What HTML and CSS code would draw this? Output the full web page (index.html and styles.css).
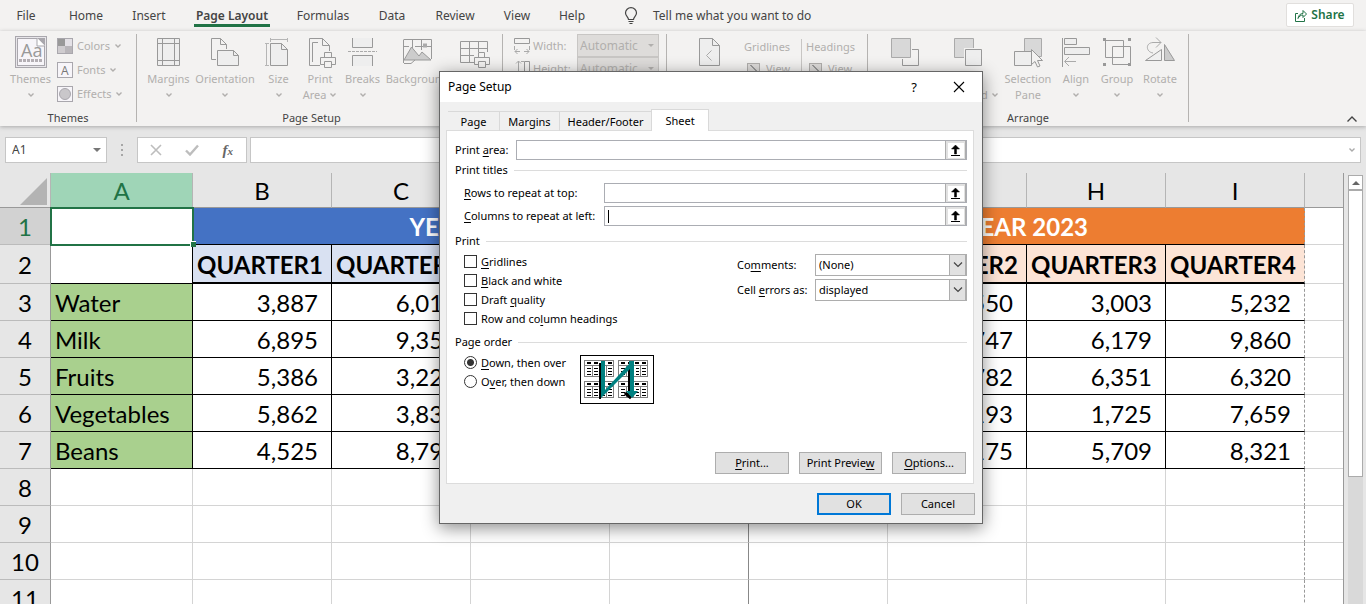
FILE: index.html
```html
<!DOCTYPE html>
<html lang="en">
<head>
<meta charset="utf-8">
<title>Page Setup</title>
<link rel="stylesheet" href="styles.css">
</head>
<body>
<svg class="defs" aria-hidden="true">
  <symbol id="chev" viewBox="0 0 8 6"><path d="M1.500 1.500L4 4L6.500 1.500" fill="none" stroke="currentColor" stroke-width="1.400"/></symbol>
  <symbol id="uparrow" viewBox="0 0 16 15"><rect width="16" height="15" fill="#fff"/><path d="M7.500 2L11.500 6H8.500V11H6.500V6H3.500Z" fill="#000" stroke="#000" stroke-width=".5"/><path d="M3 12.500H12" stroke="#000"/></symbol>
  <symbol id="minipage" viewBox="0 0 30 17"><rect x=".5" y=".5" width="29" height="16" fill="#fff" stroke="#808080"/><path d="M0 5.500H30M8.500 5V17M15.500 5V17M22.500 5V17" stroke="#808080"/><path d="M3 3H7M10 3H14M17 3H21M24 3H28" stroke="#000" stroke-width="2"/><path d="M3 8.500H7M3 11.500H7M3 14.500H7M10 8.500H14M10 11.500H14M10 14.500H14M18 8.500H21M18 11.500H21M18 14.500H21M24 8.500H28M24 11.500H28M24 14.500H28" stroke="#000"/></symbol>
</svg>

<nav class="menu">
  <a href="#" class="tab t-file">File</a>
  <a href="#" class="tab t-home">Home</a>
  <a href="#" class="tab t-insert">Insert</a>
  <a href="#" class="tab t-layout active">Page Layout</a>
  <a href="#" class="tab t-formulas">Formulas</a>
  <a href="#" class="tab t-data">Data</a>
  <a href="#" class="tab t-review">Review</a>
  <a href="#" class="tab t-view">View</a>
  <a href="#" class="tab t-help">Help</a>
  <button class="tell"><svg width="14" height="18" viewBox="0 0 14 18" fill="none" stroke="#444" stroke-width="1.200"><path d="M4.500 12.500C4.500 10 1.500 9 1.500 6A5.500 5.300 0 0 1 12.500 6C12.500 9 9.500 10 9.500 12.500ZM4.500 14.500H9.500M5.500 16.500H8.500"/></svg>Tell me what you want to do</button>
  <button class="share"><svg width="12" height="13" viewBox="0 0 12 13" fill="none" stroke="#217346"><path d="M3 4.500H.500V12.500H9.500V9M3 9.500C3.500 6 5.500 4.500 8 4.500V1.500L11.500 5L8 8.500V6C5.500 6 4 7.500 3 9.500Z"/></svg>Share</button>
</nav>

<div class="ribbon">
  <section class="group g-themes">
    <div class="items">
      <button class="tool w-themes"><svg width="32" height="32" viewBox="0 0 32 32"><rect x=".5" y=".5" width="31" height="31" fill="#e8e6ea" stroke="#a9a7ad"/><rect x="2.500" y="2.500" width="27" height="27" fill="#f7f5f9" stroke="#a9a7ad"/><path d="M22 2H30V10Z" fill="#a9a7ad"/><path d="M22 2V10H30" fill="#fff" stroke="#a9a7ad"/><path d="M4 24.500H28" stroke="#b3aeb3" stroke-width="3" stroke-dasharray="3 1"/><text x="6" y="21" class="aa">Aa</text></svg><span>Themes</span><svg class="chev"><use href="#chev"/></svg></button>
      <div class="stack">
        <button class="mini"><svg width="16" height="16"><rect x=".5" y=".5" width="15" height="15" fill="#e4e1e6" stroke="#a9a7ad"/><path d="M1 1H8V8H1Z" fill="#999"/><path d="M1 8H8V15H1Z" fill="#cfcccf"/><path d="M8 8H15V15H8Z" fill="#b9b6ba"/></svg>Colors<svg class="chev"><use href="#chev"/></svg></button>
        <button class="mini"><svg width="16" height="16"><rect x=".5" y=".5" width="15" height="15" fill="#f7f5f9" stroke="#a9a7ad"/><text x="4" y="13" class="fa">A</text></svg>Fonts<svg class="chev"><use href="#chev"/></svg></button>
        <button class="mini"><svg width="16" height="16"><rect x=".5" y=".5" width="15" height="15" fill="#f7f5f9" stroke="#a9a7ad"/><circle cx="8" cy="8" r="5.500" fill="#c9c7ca" stroke="#a9a7ad"/></svg>Effects<svg class="chev"><use href="#chev"/></svg></button>
      </div>
    </div>
    <h2>Themes</h2>
  </section>

  <section class="group g-setup">
    <div class="items">
      <button class="tool w-margins"><svg width="32" height="32" class="ic"><path d="M4.500 2.500H26.500V29.500H4.500Z" fill="#eee"/><path d="M9.500 2V30M21.500 2V30M4 7.500H27M4 24.500H27"/></svg><span>Margins</span><svg class="chev"><use href="#chev"/></svg></button>
      <button class="tool w-orient"><svg width="32" height="32" class="ic"><path d="M7 23.500H2.500V2.500H11.500L17.500 8.500V13M11.500 2.500V8.500H17.500"/><path d="M8.500 14.500H24.500L29.500 19.500V29.500H8.500Z" fill="#eee"/><path d="M24.500 14.500V19.500H29.500"/></svg><span>Orientation</span><svg class="chev"><use href="#chev"/></svg></button>
      <button class="tool w-size"><svg width="32" height="32" class="ic"><path d="M7.500 7.500H18.500L24.500 13.500V29.500H7.500Z" fill="#eee"/><path d="M18.500 7.500V13.500H24.500"/><path d="M7 3.500H25M7.500 2V6M24.500 2V6M3.500 7V30M2 7.500H6M2 29.500H6" stroke="#b5b5b5"/></svg><span>Size</span><svg class="chev"><use href="#chev"/></svg></button>
      <button class="tool w-area"><svg width="32" height="32" class="ic"><path d="M16 29.500H5.500V2.500H18.500L25.500 9.500V15"/><path d="M18.500 2.500V9.500H25.500M8.500 26V6.500H14"/><path d="M20.500 21V16.500H27.500V21M20 28.500H16.500V21.500H31.500V28.500H28M20.500 25.500H27.500V31.500H20.500Z" fill="#f3f2f1"/></svg><span>Print<br>Area <svg class="chev"><use href="#chev"/></svg></span></button>
      <button class="tool w-breaks"><svg width="32" height="32" class="ic"><path d="M5.500 2V11.500H25.500V2M5.500 30V19.500H25.500V30" fill="#eee"/><path d="M1 15.500H30" stroke="#aaa" stroke-dasharray="3 1"/></svg><span>Breaks</span><svg class="chev"><use href="#chev"/></svg></button>
      <button class="tool w-bg"><svg width="32" height="32" class="ic"><path d="M3 3.500H30.500V23M2.500 27V3.500M11.500 3V12M20.500 3V14M3 10.500H8M14 10.500H30"/><path d="M3 24L10.500 11L18 20L21 16L30 24Z" fill="#ccc"/><path d="M22 7.500H26V11.500H22Z" fill="#aaa" stroke="none"/><path d="M3 27.500H10L14 24"/></svg><span>Background</span></button>
      <button class="tool w-titles" aria-label="Print titles"><svg width="32" height="32" class="ic"><path d="M17 26.500H2.500V5.500H29.500V16M11.500 5V26M20.500 5V16M2 12.500H30M2 19.500H16"/><path d="M20.500 21V16.500H26.500V21M20 28.500H16.500V21.500H31.500V28.500H28M20.500 25.500H27.500V31.500H20.500Z" fill="#f3f2f1"/></svg></button>
    </div>
    <h2>Page Setup</h2>
  </section>

  <section class="group g-scale">
    <div class="scale">
      <svg width="17" height="17" class="ic"><path d="M.500 1.500H15.500V6.500H.500Z"/><path d="M.500 9V13M15.500 9V13M1 14.500H6M10 14.500H15M3.500 12L1 14.500L3.500 17M12.500 12L15 14.500L12.500 17" stroke="#aaa"/></svg>
      <label for="sw">Width:</label><span class="rsel"><select id="sw"><option>Automatic</option></select><i></i></span>
      <svg width="17" height="17" class="ic"><path d="M10.500 1.500H15.500V17H10.500Z"/><path d="M4.500 1V17M2 3.500L4.500 1L7 3.500M7 1.500H10" stroke="#aaa"/></svg>
      <label for="sh">Height:</label><span class="rsel"><select id="sh"><option>Automatic</option></select><i></i></span>
    </div>
  </section>

  <section class="group g-sheet">
    <div class="items">
      <button class="tool w-rtl" aria-label="Sheet right-to-left"><svg width="32" height="32" class="ic"><path d="M6.500 2.500H19.500L26.500 9.500V29.500H6.500Z" fill="#eee"/><path d="M19.500 2.500V9.500H26.500"/><path d="M18.500 14.500L13.500 19.500L18.500 24.500" stroke="#aaa"/></svg></button>
      <div class="opt"><b>Gridlines</b><label><input type="checkbox" checked> View</label></div>
      <div class="opt"><b>Headings</b><label><input type="checkbox" checked> View</label></div>
    </div>
  </section>

  <section class="group g-arrange">
    <div class="items">
      <button class="tool w-fwd" aria-label="Bring forward"><svg width="32" height="32" class="ic"><path d="M13.500 13.500H29.500V29.500H13.500Z"/><path d="M1 1H23V23H1Z" fill="#f3f2f1" stroke="none"/><path d="M2.500 2.500H21.500V21.500H2.500Z" fill="#d8d8d8" stroke="#aaa"/></svg></button>
      <button class="tool w-back"><svg width="32" height="32" class="ic"><path d="M2.500 2.500H21.500V21.500H2.500Z" fill="#d8d8d8" stroke="#aaa"/><path d="M12 12H31V31H12Z" fill="#f3f2f1" stroke="none"/><path d="M13.500 13.500H29.500V29.500H13.500Z" fill="#eee"/></svg><span>Send<br>Backward <svg class="chev"><use href="#chev"/></svg></span></button>
      <button class="tool w-sel"><svg width="32" height="32" class="ic"><path d="M12.500 2.500H29.500V20.500H12.500Z" fill="#d8d8d8" stroke="#aaa"/><path d="M2.500 15.500H19.500V29.500H2.500Z" fill="#eee"/><path d="M19.500 13.500V28.500L23 25.500L25.500 31L28 30L25.500 24.500H30.500Z" fill="#f3f2f1"/></svg><span>Selection<br>Pane</span></button>
      <button class="tool w-align"><svg width="32" height="32" class="ic"><path d="M2.500 2V31"/><path d="M4.500 2.500H16.500V8.500H4.500ZM4.500 11.500H29.500V18.500H4.500Z" fill="#eee"/><path d="M5 25.500H16M9 21L4.500 25.500L9 30" stroke="#aaa"/></svg><span>Align</span><svg class="chev"><use href="#chev"/></svg></button>
      <button class="tool w-group"><svg width="32" height="32" class="ic"><path d="M4.500 4.500H22.500V21.500H4.500ZM11.500 10.500H29.500V28.500H11.500Z"/><path d="M2 2H5V5H2ZM27 2H30V5H27ZM2 27H5V30H2ZM27 27H30V30H27Z" fill="#999" stroke="none"/></svg><span>Group</span><svg class="chev"><use href="#chev"/></svg></button>
      <button class="tool w-rot"><svg width="32" height="32" class="ic"><path d="M1.500 24.500H17.500V13.500Z" fill="#f0f0f0"/><path d="M20.500 24.500H30.500L20.500 8.500Z" fill="#ccc"/><path d="M9 17C2 16 1 7 9 6.500H17M12 1.500L17 6.500L12 11.500" stroke="#aaa"/></svg><span>Rotate</span><svg class="chev"><use href="#chev"/></svg></button>
    </div>
    <h2>Arrange</h2>
  </section>
  <button class="collapse" aria-label="Collapse ribbon"><svg width="12" height="8" fill="none" stroke="#444" stroke-width="1.400"><path d="M1.500 6.500L6 2L10.500 6.500"/></svg></button>
</div>

<div class="formula">
  <div class="namebox"><input type="text" value="A1" aria-label="Name box"><i></i></div>
  <svg class="dots" width="4" height="14"><path d="M2 1V3M2 6V8M2 11V13" stroke="#a6a6a6" stroke-width="2"/></svg>
  <div class="fxbox">
    <button aria-label="Cancel entry"><svg width="12" height="12" stroke="#bdbdbd" stroke-width="1.600"><path d="M1 1L11 11M11 1L1 11"/></svg></button>
    <button aria-label="Enter"><svg width="14" height="12" stroke="#bdbdbd" stroke-width="2.400" fill="none"><path d="M1 6.500L5 10.500L13 1.500"/></svg></button>
    <button class="fx" aria-label="Insert function">f<small>x</small></button>
  </div>
  <div class="fbar"><input type="text" aria-label="Formula bar"><svg width="8" height="6"><use href="#chev"/></svg></div>
</div>

<div class="workspace">
  <div class="sheet">
    <table>
      <colgroup><col class="c-row"><col class="c-a"><col class="c-n"><col class="c-n"><col class="c-n"><col class="c-n"><col class="c-n"><col class="c-n"><col class="c-n"><col class="c-n"><col></colgroup>
      <thead><tr><th class="corner"><svg width="27" height="27"><path d="M27 0V27H0Z" fill="#b3b3b3"/></svg></th><th class="sel">A</th><th>B</th><th>C</th><th></th><th></th><th></th><th></th><th>H</th><th>I</th><th class="end"></th></tr></thead>
      <tbody class="data">
        <tr><th class="selrow">1</th><td class="cursor"><i></i></td><td colspan="4" class="y22">YEAR 2022</td><td colspan="4" class="y23">YEAR 2023</td><td class="out"></td></tr>
        <tr class="quarters"><th>2</th><td class="blank"></td><td class="q22">QUARTER1</td><td class="q22">QUARTER2</td><td class="q22"></td><td class="q22"></td><td class="q23"></td><td class="q23">QUARTER2</td><td class="q23">QUARTER3</td><td class="q23 last">QUARTER4</td><td class="out"></td></tr>
        <tr><th>3</th><td class="name">Water</td><td>3,887</td><td>6,012</td><td></td><td></td><td></td><td>4,550</td><td>3,003</td><td class="last">5,232</td><td class="out"></td></tr>
        <tr><th>4</th><td class="name">Milk</td><td>6,895</td><td>9,354</td><td></td><td></td><td></td><td>5,747</td><td>6,179</td><td class="last">9,860</td><td class="out"></td></tr>
        <tr><th>5</th><td class="name">Fruits</td><td>5,386</td><td>3,225</td><td></td><td></td><td></td><td>3,782</td><td>6,351</td><td class="last">6,320</td><td class="out"></td></tr>
        <tr><th>6</th><td class="name">Vegetables</td><td>5,862</td><td>3,836</td><td></td><td></td><td></td><td>8,193</td><td>1,725</td><td class="last">7,659</td><td class="out"></td></tr>
        <tr><th>7</th><td class="name">Beans</td><td>4,525</td><td>8,794</td><td></td><td></td><td></td><td>2,175</td><td>5,709</td><td class="last">8,321</td><td class="out"></td></tr>
      </tbody>
      <tbody class="empty">
        <tr><th>8</th><td></td><td></td><td></td><td></td><td class="brk"></td><td></td><td></td><td></td><td class="last"></td><td></td></tr>
        <tr><th>9</th><td></td><td></td><td></td><td></td><td class="brk"></td><td></td><td></td><td></td><td class="last"></td><td></td></tr>
        <tr><th>10</th><td></td><td></td><td></td><td></td><td class="brk"></td><td></td><td></td><td></td><td class="last"></td><td></td></tr>
        <tr><th>11</th><td></td><td></td><td></td><td></td><td class="brk"></td><td></td><td></td><td></td><td class="last"></td><td></td></tr>
      </tbody>
    </table>
  </div>
  <div class="scroll"><button aria-label="Scroll up"><i></i></button><div class="thumb"></div></div>
</div>

<div class="dialog" role="dialog" aria-labelledby="dt">
  <header><h1 id="dt">Page Setup</h1><button class="help" aria-label="Help">?</button><button class="close" aria-label="Close"><svg width="12" height="12" stroke="#000" stroke-width="1.100"><path d="M1 1L11 11M11 1L1 11"/></svg></button></header>
  <div class="body">
    <div class="tabs"><button class="p1">Page</button><button class="p2">Margins</button><button class="p3">Header/Footer</button><button class="p4 on">Sheet</button></div>
    <div class="panel">
      <div class="field"><label for="pa" class="short">Print <u>a</u>rea:</label><div class="ref"><input id="pa" type="text"><button aria-label="Pick range"><svg width="16" height="15"><use href="#uparrow"/></svg></button></div></div>
      <h3 class="first">Print titles</h3>
      <div class="field in"><label for="rr"><u>R</u>ows to repeat at top:</label><div class="ref"><input id="rr" type="text"><button aria-label="Pick rows"><svg width="16" height="15"><use href="#uparrow"/></svg></button></div></div>
      <div class="field in next"><label for="cr"><u>C</u>olumns to repeat at left:</label><div class="ref"><span class="caret"></span><input id="cr" type="text"><button aria-label="Pick columns"><svg width="16" height="15"><use href="#uparrow"/></svg></button></div></div>
      <h3 class="print">Print</h3>
      <div class="cols">
        <div class="checks">
          <label><input type="checkbox"><span><u>G</u>ridlines</span></label>
          <label><input type="checkbox"><span><u>B</u>lack and white</span></label>
          <label><input type="checkbox"><span>Draft <u>q</u>uality</span></label>
          <label><input type="checkbox"><span>Row and co<u>l</u>umn headings</span></label>
        </div>
        <div class="selects">
          <label for="cm">Co<u>m</u>ments:</label><div class="dsel"><select id="cm"><option>(None)</option></select><span><svg width="10" height="6" fill="none" stroke="#444" stroke-width="1.200"><path d="M1 .500L5 4.500L9 .500"/></svg></span></div>
          <label for="ce">Cell <u>e</u>rrors as:</label><div class="dsel"><select id="ce"><option>displayed</option></select><span><svg width="10" height="6" fill="none" stroke="#444" stroke-width="1.200"><path d="M1 .500L5 4.500L9 .500"/></svg></span></div>
        </div>
      </div>
      <h3 class="order">Page order</h3>
      <div class="cols">
        <div class="checks radios">
          <label><input type="radio" name="o" checked><span><u>D</u>own, then over</span></label>
          <label><input type="radio" name="o"><span>O<u>v</u>er, then down</span></label>
        </div>
        <svg class="preview" width="74" height="49" viewBox="0 0 74 49"><rect x=".5" y=".5" width="73" height="48" fill="#fff" stroke="#000"/><use href="#minipage" x="4" y="5" width="30" height="17"/><use href="#minipage" x="38" y="5" width="30" height="17"/><use href="#minipage" x="4" y="26" width="30" height="17"/><use href="#minipage" x="38" y="26" width="30" height="17"/><path d="M19 8H21V44H19ZM48 14H51V38L48 40L51 44L46 40L44 38H48Z" fill="#000"/><path d="M45 38L51 43" stroke="#000" stroke-width="3"/><path d="M21 6H25V35L49 9V6H54V36H58L52 43L46 36H50V14L21 43Z" fill="#008080"/></svg>
      </div>
      <div class="actions"><button><u>P</u>rint...</button><button class="wide">Print Previe<u>w</u></button><button><u>O</u>ptions...</button></div>
    </div>
    <footer><button class="ok">OK</button><button>Cancel</button></footer>
  </div>
</div>
</body>
</html>
```
FILE: styles.css
```css
* { box-sizing: border-box; }
body { margin: 0; height: 100vh; overflow: hidden; display: flex; flex-direction: column; background: #e6e6e6; font: 12px/16px "Noto Sans", "Open Sans", sans-serif; color: #444; }
button, input, select { font: inherit; color: inherit; margin: 0; padding: 0; border: 0; background: none; border-radius: 0; }
h1, h2, h3 { margin: 0; font-size: inherit; font-weight: 400; }
svg { display: block; flex: none; }
.defs { position: absolute; width: 0; height: 0; }

.menu { flex: none; display: flex; height: 31px; background: #f3f2f1; }
.tab { height: 27px; padding-top: 8px; text-align: center; color: #444; text-decoration: none; white-space: nowrap; }
.t-file { width: 52px; }
.t-home { width: 68px; }
.t-insert { width: 58px; }
.t-layout { width: 76px; margin: 0 13px 0 16px; }
.t-formulas { width: 80px; }
.t-data { width: 58px; }
.t-review { width: 68px; }
.t-view { width: 56px; }
.t-help { width: 54px; }
.active { font-weight: 600; border-bottom: 3px solid #217346; }
.tell { display: flex; align-items: center; gap: 15px; margin-left: 25px; white-space: nowrap; }
.share { display: flex; align-items: center; justify-content: center; gap: 4px; margin: 3px 12px 0 auto; width: 68px; height: 24px; background: #fff; border: 1px solid #e1dfdd; border-radius: 2px; color: #217346; font-weight: 600; }

.ribbon { flex: none; display: flex; height: 95px; background: #f3f2f1; box-shadow: 0 1px 4px #aaa; color: #b1afad; position: relative; }
.group { height: 88px; margin-top: 3px; border-right: 1px solid #b5b3b1; display: flex; flex-direction: column; flex: none; white-space: nowrap; }
.group h2 { margin-top: 4px; font-size: 11px; line-height: 16px; text-align: center; color: #444; }
.items { display: flex; flex: none; height: 72px; padding: 0 6px; font-size: 11px; }
.g-themes { width: 137px; }
.g-setup { width: 366px; }
.g-setup h2 { padding-right: 16px; }
.g-scale { width: 164px; }
.g-sheet { width: 201px; }
.g-arrange { width: 321px; }
.tool { display: flex; flex-direction: column; align-items: center; padding-top: 2px; flex: none; }
.tool > span { margin-top: 3px; text-align: center; }
.tool > .chev { margin-top: 5px; }
.chev { width: 8px; height: 6px; }
span .chev { display: inline-block; vertical-align: 1px; }
.ic { fill: none; stroke: #999; }
.aa { font: 18px "Open Sans", sans-serif; fill: #999; }
.fa { font: 12px "Open Sans", sans-serif; fill: #777; }
.w-themes { width: 49px; }
.stack { display: flex; flex-direction: column; }
.mini { display: flex; align-items: center; gap: 4px; height: 24px; padding-left: 2px; }
.w-margins { width: 51px; }
.w-orient, .w-bg, .w-fwd { width: 62px; }
.w-size { width: 45px; }
.w-area { width: 38px; }
.w-breaks { width: 47px; }
.w-titles { width: 52px; }
.w-rtl { width: 71px; }
.w-back { width: 64px; }
.w-sel { width: 56px; }
.w-align { width: 40px; }
.w-group { width: 42px; }
.w-rot { width: 44px; }
.scale { display: grid; grid-template-columns: 17px 42px 82px; grid-auto-rows: 23px; column-gap: 2px; padding-left: 11px; align-items: center; font-size: 11px; }
.rsel { display: flex; align-items: center; height: 23px; border: 1px solid #c8c6c4; background: #dedcda; padding: 0 4px 0 2px; font-size: 12px; }
.rsel select { appearance: none; flex: 1; min-width: 0; }
.rsel i, .namebox i { border: 4px solid transparent; border-top-color: #b1afad; border-bottom: 0; }
.rsel i { border-width: 3px 3px 0; }
.opt { display: flex; flex-direction: column; width: 57px; padding-top: 5px; align-items: flex-start; gap: 6px; }
.opt b { font-weight: 400; }
.opt + .opt { border-left: 1px solid #c8c6c4; margin-top: 5px; padding: 0 0 0 4px; }
.opt label { display: flex; gap: 6px; align-items: center; padding-left: 3px; }
.opt input { appearance: none; width: 13px; height: 13px; border: 1px solid #b1afad; background: #dedcda linear-gradient(45deg, transparent 45%, #999 45% 58%, transparent 58%) center / 8px 8px no-repeat; }
.collapse { margin: auto 8px 3px auto; }

.formula { flex: none; display: flex; align-items: center; height: 47px; padding: 1px 5px 0; }
.namebox, .fxbox, .fbar { display: flex; align-items: center; height: 26px; background: #fff; border: 1px solid #c6c6c6; }
.namebox { width: 102px; padding: 0 5px 0 6px; }
.namebox input { flex: 1; min-width: 0; }
.namebox i { border-top-color: #777; }
.dots { margin: 0 13px; }
.fxbox { width: 110px; justify-content: space-between; padding: 0 13px 0 12px; }
.fx { font: italic 700 15px "Liberation Serif", serif; color: #666; }
.fx small { font-size: 11px; }
.fbar { flex: 1; margin-left: 3px; padding-right: 4px; color: #aaa; }
.fbar input { flex: 1; }

.workspace { flex: 1; min-height: 0; display: flex; overflow: hidden; }
.sheet { flex: 1; min-width: 0; border-right: 1px solid #999; }
table { width: 100%; table-layout: fixed; border-collapse: separate; border-spacing: 0; font: 24px/32px Lato, sans-serif; color: #000; background: #fff; }
.c-row { width: 51px; }
.c-a { width: 142px; }
.c-n { width: 139px; }
th, td { padding: 2px 0 0; height: 37px; font-weight: 400; overflow: hidden; white-space: nowrap; }
th { background: #e6e6e6; border-right: 1px solid #999; border-bottom: 1px solid #bbb; }
thead th { height: 35px; border-bottom-color: #999; border-right-color: #b5b5b5; }
thead .sel { background: #9fd5b7; color: #217346; }
thead .end { border-right: 0; }
.corner svg { margin: 1px 3px 0 auto; }
.selrow { background: #d2d2d2; color: #217346; }
.data td { border-right: 1px solid #000; border-bottom: 1px solid #000; text-align: right; padding-right: 13px; }
.data .quarters td { height: 39px; border-bottom-width: 2px; font-weight: 700; text-align: left; padding: 2px 0 0 4px; }
.data .quarters .blank { border-bottom-width: 1px; }
.data .name { background: #a9d08e; text-align: left; padding: 2px 0 0 4px; }
.data .y22, .data .y23 { background: #4472c4; color: #fff; font-weight: 700; text-align: center; padding: 2px 0 0; border-right: 0; }
.data .y23 { background: #ed7d31; border-right: 1px dashed #999; }
.q22 { background: #d9e1f2; }
.q23 { background: #fce4d6; }
.data .out, .data .quarters .out, .empty td { border-right: 0; border-bottom: 1px solid #d4d4d4; }
.empty td { border-right: 1px solid #d4d4d4; }
.empty .brk { border-right-color: #888; }
.data .last, .empty .last { border-right: 1px dashed #999; }
.empty td:last-child { border-right: 0; }
.data .cursor { position: relative; overflow: visible; border: 0; outline: 2px solid #217346; outline-offset: -1px; z-index: 1; padding: 0; }
.cursor i { position: absolute; right: -3px; bottom: -2px; width: 6px; height: 6px; background: #217346; border: solid #fff; border-width: 1px 0 0 1px; }
.scroll { width: 15px; margin: 2px 3px 0 4px; display: flex; flex-direction: column; background: #d9d9d9; }
.scroll button { height: 15px; background: #fff; border: 1px solid #ababab; display: grid; place-items: center; flex: none; }
.scroll i { border: 4px solid transparent; border-bottom-color: #666; border-top: 0; }
.thumb { height: 287px; background: #fff; border: 1px solid #ababab; flex: none; }

.dialog { position: absolute; left: 439px; top: 71px; width: 544px; background: #f0f0f0; border: 1px solid #666; box-shadow: 0 4px 16px rgba(0, 0, 0, .45); color: #000; font-size: 11px; z-index: 5; }
.dialog header { display: flex; align-items: center; height: 30px; background: #fff; padding-left: 8px; }
.dialog h1 { flex: 1; font-size: 12px; }
.help { width: 12px; font-size: 13px; }
.close { margin: 0 17px 0 33px; }
.dialog u { text-underline-offset: 2px; }
.body { padding: 7px 8px 8px 6px; }
.tabs { display: flex; align-items: flex-end; height: 22px; margin-bottom: -1px; position: relative; }
.tabs button { height: 20px; border: 1px solid #d9d9d9; border-left: 0; border-bottom: 0; white-space: nowrap; padding-top: 1px; }
.tabs .p1 { width: 52px; margin-left: 2px; }
.tabs .p2 { width: 60px; }
.tabs .p3 { width: 91px; border-right: 0; }
.tabs .on { width: 58px; height: 22px; border-left: 1px solid #d9d9d9; background: #fff; }
.panel { background: #fff; border: 1px solid #dcdcdc; padding: 9px 6px 9px 8px; }
.field { display: flex; height: 20px; align-items: center; white-space: nowrap; }
.field label { width: 140px; }
.field .short { width: 61px; }
.in { padding-left: 9px; }
.next { margin-top: 3px; }
.ref { flex: 1; display: flex; height: 20px; border: 1px solid #abadb3; align-items: center; }
.ref input { flex: 1; min-width: 0; }
.ref button { width: 21px; height: 18px; background: #e1e1e1; border: solid #adadad; border-width: 0 1px 0 1px; display: grid; place-items: center; }
.caret { width: 1px; height: 13px; margin-left: 3px; background: #000; }
h3 { display: flex; align-items: center; gap: 6px; height: 16px; }
h3::after { content: ""; flex: 1; border-top: 1px solid #dcdcdc; }
.first { margin: 2px 0 5px; }
.print { margin: 7px 0 3px; }
.order { margin: 6px 0 3px; }
.cols { display: flex; justify-content: space-between; padding-left: 9px; }
.checks label { display: flex; align-items: center; gap: 4px; height: 19px; white-space: nowrap; }
.checks input { appearance: none; width: 13px; height: 13px; border: 1px solid #333; background: #fff; }
.radios { width: 116px; }
.preview { margin: 2px auto 0 0; }
.radios input { border-radius: 50%; }
.radios input:checked { background: radial-gradient(circle, #333 3px, #fff 4px); }
.selects { display: grid; grid-template-columns: 78px 152px; grid-auto-rows: 22px; row-gap: 3px; align-items: center; margin-top: 2px; align-content: start; }
.dsel { display: flex; height: 22px; border: 1px solid #adadad; }
.dsel select { flex: 1; appearance: none; min-width: 0; padding-left: 3px; }
.dsel span { width: 17px; background: #e1e1e1; border: 1px solid #adadad; border-width: 0 1px 0 1px; display: grid; place-items: center; }
.actions, footer { display: flex; justify-content: flex-end; gap: 10px; }
.actions { margin: 48px 1px 0 0; }
.actions button, footer button { width: 74px; height: 22px; background: #e1e1e1; border: 1px solid #adadad; text-align: center; }
.actions .wide { width: 83px; }
footer { margin: 9px -1px 0 0; }
footer .ok { border: 2px solid #0078d7; }
```
